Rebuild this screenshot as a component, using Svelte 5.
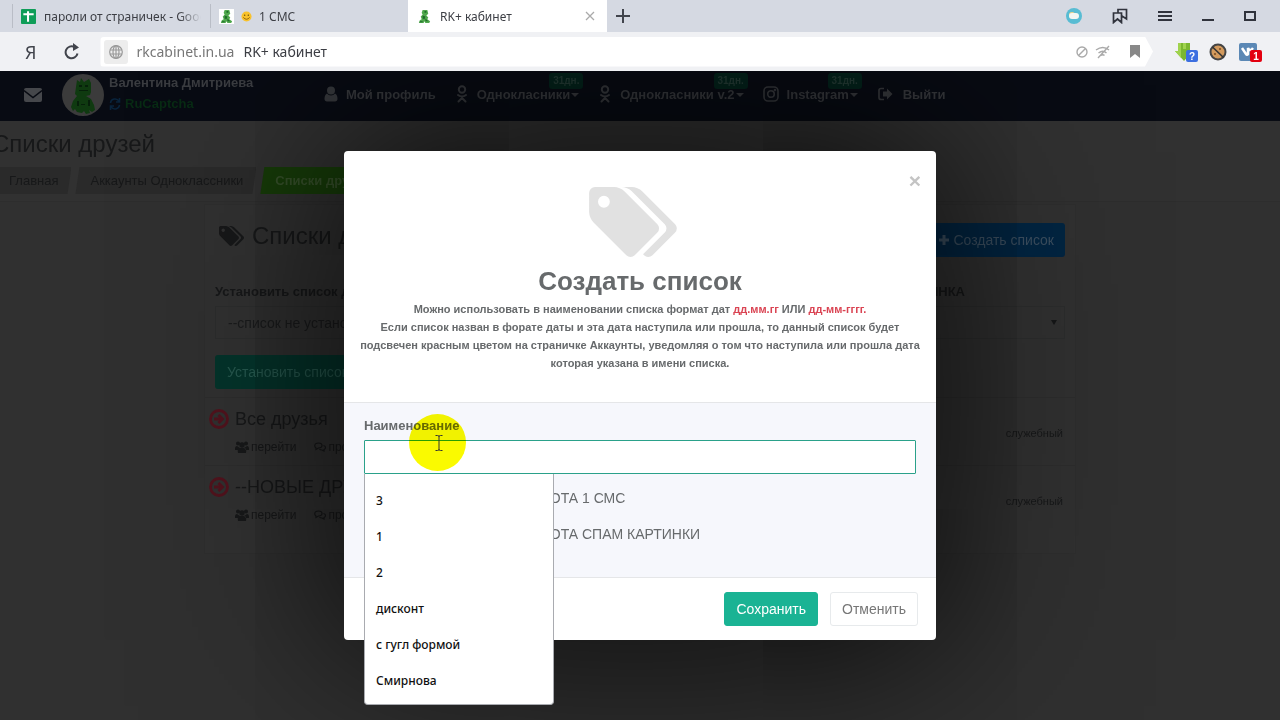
<script lang="ts">
  // Friend lists page with the "create list" dialog open, inside the browser frame.

  interface NavItem {
    icon: 'user' | 'ok' | 'insta' | 'exit';
    label: string;
    badge?: string;
  }

  const navItems: NavItem[] = [
    { icon: 'user', label: 'Мой профиль' },
    { icon: 'ok', label: 'Однокласники', badge: '31дн.' },
    { icon: 'ok', label: 'Однокласники v.2', badge: '31дн.' },
    { icon: 'insta', label: 'Instagram', badge: '31дн.' },
    { icon: 'exit', label: 'Выйти' },
  ];

  const friendLists = ['Все друзья', '--НОВЫЕ ДРУЗЬЯ'];
  const suggestions = ['3', '1', '2', 'дисконт', 'с гугл формой', 'Смирнова'];
  const options = ['РАБОТА 1 СМС', 'РАБОТА СПАМ КАРТИНКИ'];

  let open = $state(true);
  let name = $state('');

  function pick(value: string) {
    name = value;
  }

  function close() {
    open = false;
  }
</script>

{#snippet tags()}
  <svg class="tags" viewBox="0 128 1900 1516" aria-hidden="true">
    <path
      fill="currentColor"
      d="M448 448q0-53-37.5-90.5t-90.5-37.5-90.5 37.5-37.5 90.5 37.5 90.5 90.5 37.5 90.5-37.5 37.5-90.5zm1067 576q0 53-37 90l-491 492q-39 37-91 37-53 0-90-37l-715-716q-38-37-64.5-101t-26.5-117v-416q0-52 38-90t90-38h416q53 0 117 26.5t102 64.5l715 714q37 39 37 91zm384 0q0 53-37 90l-491 492q-39 37-91 37-36 0-59-14t-53-45l470-470q37-37 37-90 0-52-37-91l-715-714q-38-38-102-64.5t-117-26.5h224q53 0 117 26.5t102 64.5l715 714q37 39 37 91z"
    />
  </svg>
{/snippet}

{#snippet lizard()}
  <svg class="favicon" viewBox="0 0 16 16" aria-hidden="true">
    <path fill="#4fa84c" d="M6 1l5 0 1 4-2 2 2 2-1 2 3 2-1 2H9l-1-2-1 2H2l1-3 2-1-1-3 2-2-1-2z" />
    <path fill="#1f6b2a" d="M8 2h2v2H8zM6 7l3 1-1 3-2-1zM3 13h3v1H3zM9 10l3 3H9z" />
  </svg>
{/snippet}

{#snippet navIcon(kind: NavItem['icon'])}
  {#if kind === 'user'}
    <svg width="14" height="16" viewBox="0 0 14 16" fill="currentColor" aria-hidden="true">
      <circle cx="7" cy="4.5" r="4" />
      <path d="M3 7.5C1 8.500 .5 10.500.5 13c0 1.500 1 2.500 2.500 2.500h8c1.500 0 2.500-1 2.500-2.500 0-2.500-.5-4.500-2.500-5.500-1 1.300-2.500 2-4 2s-3-.7-4-2z" />
    </svg>
  {:else if kind === 'ok'}
    <svg width="14" height="18" viewBox="0 0 14 18" fill="none" stroke="currentColor" stroke-width="2" stroke-linecap="round" aria-hidden="true">
      <circle cx="7" cy="4.500" r="3.200" />
      <path d="M3 10c2.500 1.800 5.500 1.800 8 0M7 11.500v1.500M3.500 16.500L7 13l3.500 3.500" />
    </svg>
  {:else if kind === 'insta'}
    <svg width="16" height="16" viewBox="0 0 16 16" fill="none" stroke="currentColor" stroke-width="1.600" aria-hidden="true">
      <rect x="1" y="1" width="14" height="14" rx="4" />
      <circle cx="8" cy="8" r="3.300" />
      <circle cx="12" cy="4" r=".5" />
    </svg>
  {:else}
    <svg width="18" height="16" viewBox="0 0 18 16" aria-hidden="true">
      <path fill="none" stroke="currentColor" stroke-width="1.700" d="M7 2.500H4q-2 0-2 2v7q0 2 2 2h3" />
      <path fill="currentColor" d="M6 5.500h4V2.500L15.500 8 10 13.500v-3H6z" />
    </svg>
  {/if}
{/snippet}

<div class="browser">
  <div class="tabs">
    <div class="tab first">
      <svg class="favicon" viewBox="0 0 16 16" aria-hidden="true">
        <rect width="16" height="16" rx="1" fill="#0f9d58" />
        <path d="M2.500 5.500h11M7.500 2.500v11" stroke="#fff" stroke-width="2.200" />
      </svg>
      <span class="tab-title faded">пароли от страничек - Google</span>
    </div>
    <div class="tab second">
      <span class="favicon-plate">{@render lizard()}</span>
      <svg class="smile" viewBox="0 0 12 12" aria-hidden="true">
        <circle cx="6" cy="6" r="5.500" fill="#f9c22b" />
        <circle cx="4" cy="4.500" r=".8" fill="#5c4208" />
        <circle cx="8" cy="4.500" r=".8" fill="#5c4208" />
        <path d="M2.500 7q3.500 4 7 0" fill="none" stroke="#8a5f0c" />
      </svg>
      <span class="tab-title">1 СМС</span>
    </div>
    <div class="tab active">
      {@render lizard()}
      <span class="tab-title">RK+ кабинет</span>
      <button class="icon-btn" aria-label="Закрыть вкладку">
        <svg width="10" height="10" viewBox="0 0 10 10" stroke="#aaa" stroke-width="1.300"><path d="M1 1l8 8M9 1L1 9" /></svg>
      </button>
    </div>
    <button class="icon-btn new-tab" aria-label="Новая вкладка">
      <svg width="14" height="14" viewBox="0 0 14 14" stroke="#41444c" stroke-width="2"><path d="M7 0v14M0 7h14" /></svg>
    </button>
    <div class="window-buttons">
      <button class="icon-btn" aria-label="Погода">
        <svg width="16" height="16" viewBox="0 0 16 16">
          <circle cx="8" cy="8" r="8" fill="#58bcd3" />
          <circle cx="6" cy="7" r="3" fill="#f3d48b" />
          <rect x="3" y="5" width="10" height="6" rx="3" fill="#f3f6f2" />
        </svg>
      </button>
      <button class="icon-btn" aria-label="Закладки">
        <svg width="16" height="16" viewBox="0 0 16 16" fill="none" stroke="#30333c" stroke-width="1.700">
          <path d="M1.500 5h8v9.500L5.500 11l-4 3.500zM6 5V1.500h8.500V11L10 8" />
        </svg>
      </button>
      <button class="icon-btn" aria-label="Меню">
        <svg width="14" height="12" viewBox="0 0 14 12" stroke="#30333c" stroke-width="2"><path d="M0 2h14M0 6h14M0 10h14" /></svg>
      </button>
      <button class="icon-btn" aria-label="Свернуть">
        <svg width="12" height="12" viewBox="0 0 12 12" stroke="#30333c" stroke-width="2"><path d="M0 10h12" /></svg>
      </button>
      <button class="icon-btn" aria-label="Развернуть">
        <svg width="12" height="12" viewBox="0 0 12 12" fill="none" stroke="#30333c" stroke-width="2"><path d="M1 2h10v8H1z" /></svg>
      </button>
    </div>
  </div>

  <div class="toolbar">
    <button class="icon-btn yandex" aria-label="Яндекс">Я</button>
    <button class="icon-btn" aria-label="Обновить">
      <svg width="16" height="18" viewBox="0 0 16 18">
        <path d="M13.500 10.500a6 6 0 1 1-3-6.500" fill="none" stroke="#41444c" stroke-width="2" />
        <path d="M9 0l6 4.500L9 8z" fill="#41444c" />
      </svg>
    </button>
    <div class="address">
      <span class="globe">
        <svg width="14" height="14" viewBox="0 0 14 14" fill="none" stroke="#999" stroke-width="1.200" aria-hidden="true">
          <circle cx="7" cy="7" r="6.300" />
          <ellipse cx="7" cy="7" rx="3" ry="6.300" />
          <path d="M1 5h12M1 9h12M7 1v12" />
        </svg>
      </span>
      <span class="host">rkcabinet.in.ua</span>
      <span class="page-name">RK+ кабинет</span>
      <span class="address-icons">
        <svg width="12" height="12" viewBox="0 0 12 12" fill="none" stroke="#aaa" stroke-width="1.400" aria-hidden="true">
          <circle cx="6" cy="6" r="5" /><path d="M2.500 9.500l7-7" />
        </svg>
        <svg width="16" height="14" viewBox="0 0 16 14" fill="none" stroke="#aaa" stroke-width="1.400" aria-hidden="true">
          <path d="M1 5q7-5 13 0M3.500 8q4.500-3.500 8 0M6 10.500q2-1.500 3.500 0M3 13L14 1" />
        </svg>
        <svg class="mark" width="10" height="13" viewBox="0 0 10 13" aria-hidden="true"><path fill="#888" d="M0 0h10v13L5 9l-5 4z" /></svg>
      </span>
    </div>
    <div class="extensions">
      <button class="icon-btn" aria-label="Загрузки">
        <svg width="24" height="20" viewBox="0 0 24 20">
          <path fill="#7bb72f" d="M4 1h12v8h3l-9 10L1 9h3z" />
          <path fill="#a0d34e" d="M4 1h3v15L1 9h3zM9 1h3v6H9z" />
          <rect x="12" y="8" width="12" height="12" rx="2" fill="#3d6fe0" />
          <text x="18" y="18" text-anchor="middle">?</text>
        </svg>
      </button>
      <button class="icon-btn" aria-label="Блокировка cookie">
        <svg width="18" height="18" viewBox="0 0 18 18">
          <circle cx="9" cy="9" r="7.500" fill="#d39a5d" stroke="#454545" stroke-width="2" />
          <path d="M3.500 4l11 10.500" stroke="#333" stroke-width="1.600" />
          <circle cx="11" cy="6" r="1" fill="#7a4b20" /><circle cx="6" cy="11" r="1" fill="#7a4b20" />
        </svg>
      </button>
      <button class="icon-btn" aria-label="ВКонтакте">
        <svg width="24" height="20" viewBox="0 0 24 20">
          <rect x="1" y="1" width="18" height="18" rx="2" fill="#5b88b5" />
          <path d="M4 6l4 6q1 1.500 2 0V6q2 4 5 0" fill="none" stroke="#fff" stroke-width="2.500" />
          <rect x="12" y="8" width="12" height="12" rx="2" fill="#e3000f" />
          <text x="18" y="18" text-anchor="middle">1</text>
        </svg>
      </button>
    </div>
  </div>
</div>

<div class="page">
  <header class="topbar">
    <a class="mail" href="#mail" aria-label="Сообщения">
      <svg width="18" height="14" viewBox="0 0 18 14" aria-hidden="true">
        <rect width="18" height="14" rx="2" fill="currentColor" />
        <path d="M0 2.500l9 7 9-7" fill="none" stroke="#080b13" stroke-width="1.500" />
      </svg>
    </a>
    <svg class="avatar" viewBox="0 0 42 42" aria-hidden="true">
      <circle cx="21" cy="21" r="21" fill="#3b3b3b" />
      <path fill="#0f3a10" d="M15 6l3 2 1-4 3 4 5-3 2 4v9l-1 3-4 1 5 3 3 6 1 5-3 2-3-2 1 3-4 1-2-3-2 2-5-1-2-3-2 2-2-4 2-6 4-5-2-2z" />
      <path fill="#06200a" d="M17 11h3v2h-3zM23 11h3v2h-3zM17 16h9v1h-9zM15 27h2v5h-2zM26 26h2v6h-2zM19 30h4v1h-4z" />
    </svg>
    <div class="account">
      <span class="user-name">Валентина Дмитриева</span>
      <a class="captcha" href="#captcha">
        <svg width="12" height="12" viewBox="0 0 12 12" fill="none" stroke="#09233b" stroke-width="1.600" aria-hidden="true">
          <path d="M1.500 5A4.500 4.500 0 0 1 10 3.500M10.500 0v4H7M10.500 7A4.500 4.500 0 0 1 2 8.500M1.500 12V8H5" />
        </svg>
        RuCaptcha
      </a>
    </div>
    <nav class="menu">
      {#each navItems as item, i (i)}
        <a class="menu-item" href="#menu">
          {@render navIcon(item.icon)}
          <span>{item.label}{#if item.badge}<i class="caret"></i>{/if}</span>
          {#if item.badge}<span class="badge">{item.badge}</span>{/if}
        </a>
      {/each}
    </nav>
  </header>

  <section class="heading">
    <h1>Списки друзей</h1>
    <nav class="crumbs">
      <a href="#home">Главная</a>
      <a href="#accounts">Аккаунты Одноклассники</a>
      <a class="current" href="#lists">Списки друзей</a>
    </nav>
  </section>

  <main class="card">
    <div class="card-head">
      <h2>{@render tags()} Списки друзей</h2>
      <button class="create">
        <svg width="10" height="10" viewBox="0 0 10 10" stroke="currentColor" stroke-width="3" aria-hidden="true"><path d="M5 0v10M0 5h10" /></svg>
        Создать список
      </button>
    </div>
    <label class="set-label" for="set-list"><span>Установить список для</span><span>КАРТИНКА</span></label>
    <div class="select-wrap">
      <select id="set-list">
        <option>--список не установлен--</option>
      </select>
    </div>
    <button class="set-btn">Установить список</button>

    <ul class="lists">
      {#each friendLists as title (title)}
        <li>
          <svg class="go" viewBox="0 0 20 20" fill="none" stroke="currentColor" aria-hidden="true">
            <circle cx="10" cy="10" r="8.500" stroke-width="2.800" />
            <path d="M5 10h8M9.500 6l4 4-4 4" stroke-width="2.800" />
          </svg>
          <div class="list-main">
            <h3>{title}</h3>
            <div class="links">
              <a href="#open">
                <svg width="14" height="12" viewBox="0 0 14 12" fill="currentColor" aria-hidden="true">
                  <circle cx="3" cy="2.500" r="2" /><circle cx="11" cy="2.500" r="2" /><circle cx="7" cy="4" r="2.700" />
                  <path d="M0 8q0-3 2-3l3 2-2 2H0zM14 8q0-3-2-3L9 7l2 2h3zM3 12q-1-5 2-5h4q3 0 2 5z" />
                </svg>
                перейти
              </a>
              <a href="#view">
                <svg width="12" height="10" viewBox="0 0 12 10" fill="none" stroke="currentColor" stroke-width="1.200" aria-hidden="true">
                  <path d="M4.500 1q3.500 0 3.500 2.500T4.500 6L2 7.500V6Q.5 5 .8 3.500 1 1 4.500 1zM9.500 3.500q2 .5 2 2T10 7.500V9L8 8Q6 8 5.500 7" />
                </svg>
                просмотр
              </a>
            </div>
          </div>
          <span class="kind">служебный</span>
        </li>
      {/each}
    </ul>
  </main>

  {#if open}
    <div class="overlay">
      <div class="modal" role="dialog" aria-labelledby="modal-title">
        <header class="modal-header">
          <button class="close" aria-label="Закрыть" onclick={close}>×</button>
          {@render tags()}
          <h4 id="modal-title">Создать список</h4>
          <p>
            Можно использовать в наименовании списка формат дат <em>дд.мм.гг</em> ИЛИ <em>дд-мм-гггг.</em><br />
            Если список назван в форате даты и эта дата наступила или прошла, то данный список будет
            подсвечен красным цветом на страничке Аккаунты, уведомляя о том что наступила или прошла дата
            которая указана в имени списка.
          </p>
        </header>
        <div class="modal-body">
          <label class="field-label" for="list-name">Наименование</label>
          <div class="field">
            <input id="list-name" type="text" autocomplete="off" bind:value={name} />
            <ul class="suggest">
              {#each suggestions as s (s)}
                <li><button onclick={() => pick(s)}>{s}</button></li>
              {/each}
            </ul>
            <span class="spot"></span>
            <svg class="ibeam" viewBox="0 0 8 18" fill="none" stroke="#333" aria-hidden="true">
              <path d="M.5 1.500h2q1.500 0 1.500 1 0-1 1.500-1h2M4 2v14M.5 16.500h2q1.500 0 1.500-1 0 1 1.500 1h2" />
            </svg>
          </div>
          <div class="checks">
            {#each options as option (option)}
              <label><input type="checkbox" />{option}</label>
            {/each}
          </div>
        </div>
        <footer class="modal-footer">
          <button class="btn primary">Сохранить</button>
          <button class="btn" onclick={close}>Отменить</button>
        </footer>
      </div>
    </div>
  {/if}
</div>

<style>
  :global(body) {
    margin: 0;
    background: #303030;
  }
  button,
  input,
  select {
    font-family: inherit;
    box-sizing: border-box;
  }
  a {
    color: inherit;
    text-decoration: none;
  }
  h1,
  h2,
  h3,
  h4,
  p,
  ul {
    margin: 0;
    padding: 0;
    font-weight: 400;
  }
  ul {
    list-style: none;
  }
  svg {
    display: block;
    flex: none;
  }

  /* browser frame */
  .browser {
    font-family: 'Noto Sans', 'Open Sans', sans-serif;
    color: #3c3e44;
  }
  .icon-btn {
    display: flex;
    align-items: center;
    justify-content: center;
    padding: 0;
    border: 0;
    background: none;
    cursor: pointer;
  }
  .tabs {
    display: flex;
    height: 32px;
    padding-left: 12px;
    background: #d5d9e2;
  }
  .tab {
    display: flex;
    align-items: center;
    gap: 8px;
    width: 198px;
    box-sizing: border-box;
    padding: 0 9px;
    font-size: 12px;
    white-space: nowrap;
  }
  .tab.first,
  .tab.second {
    background: linear-gradient(#b9bdc6, #b9bdc6) no-repeat left 4px / 1px 24px;
  }
  .tab.active {
    width: 199px;
    padding-right: 12px;
    background: #fff;
  }
  .tab.active .tab-title {
    flex: 1;
  }
  .tab-title {
    overflow: hidden;
  }
  .faded {
    mask-image: linear-gradient(to right, #000 86%, transparent);
  }
  .favicon {
    width: 15px;
    height: 15px;
  }
  .favicon-plate {
    background: #fff;
  }
  .smile {
    width: 11px;
    height: 11px;
  }
  .tab.second {
    gap: 7px;
  }
  .new-tab {
    width: 32px;
  }
  .window-buttons {
    display: flex;
    gap: 30px;
    margin-left: auto;
    padding-right: 24px;
  }
  .toolbar {
    display: flex;
    align-items: center;
    gap: 28px;
    height: 39px;
    padding-left: 25px;
    background: #f0f1f4;
  }
  .yandex {
    font-size: 18px;
    color: #41444c;
  }
  .address {
    display: flex;
    flex: 1;
    align-items: center;
    height: 30px;
    margin-left: -8px;
    padding: 0 13px 0 4px;
    border-radius: 4px;
    background: #fff;
    font-size: 14px;
    clip-path: polygon(0 0, calc(100% - 8px) 0, 100% 50%, calc(100% - 8px) 100%, 0 100%);
  }
  .globe {
    display: flex;
    align-items: center;
    justify-content: center;
    width: 24px;
    height: 24px;
    border-radius: 3px;
    background: #ededed;
  }
  .host {
    margin: 0 9px 0 8px;
    color: #777;
  }
  .address-icons {
    display: flex;
    align-items: center;
    gap: 7px;
    margin-left: auto;
  }
  .mark {
    margin-left: 12px;
  }
  .extensions {
    display: flex;
    gap: 6px;
    padding-right: 17px;
    margin-left: -8px;
  }
  .extensions .icon-btn {
    width: 26px;
  }
  .extensions text {
    fill: #fff;
    font: bold 10px 'Liberation Sans', sans-serif;
  }

  /* dimmed page */
  .page {
    position: relative;
    min-height: calc(100vh - 71px);
    overflow: hidden;
    background: #303030;
    font-family: 'Liberation Sans', Arial, sans-serif;
    font-size: 13px;
    color: #171819;
  }
  .topbar {
    display: flex;
    align-items: center;
    height: 50px;
    box-sizing: border-box;
    padding: 0 24px 2px;
    background: #080b13;
    color: #3a3c40;
    font-weight: 700;
    white-space: nowrap;
  }
  .mail {
    margin-right: 20px;
    color: #45474b;
  }
  .avatar {
    width: 42px;
    height: 42px;
    margin-right: 5px;
  }
  .account {
    display: flex;
    flex-direction: column;
    gap: 5px;
    width: 215px;
    line-height: 16px;
    padding-bottom: 4px;
  }
  .captcha {
    display: flex;
    align-items: center;
    gap: 4px;
    font-size: 13px;
    color: #082b14;
  }
  .menu {
    display: flex;
    gap: 19px;
    padding-bottom: 2px;
    color: #35373b;
  }
  .menu-item {
    position: relative;
    display: flex;
    align-items: center;
    gap: 8px;
    height: 18px;
  }
  .caret {
    display: inline-block;
    margin-left: 1px;
    vertical-align: 2px;
    border: 4px solid transparent;
    border-top-color: currentColor;
    border-bottom: 0;
  }
  .badge {
    position: absolute;
    right: -4px;
    top: -12px;
    width: 34px;
    border-radius: 3px;
    background: #03221b;
    color: #233a34;
    font-size: 10px;
    line-height: 16px;
    text-align: center;
  }
  .heading {
    height: 81px;
    box-sizing: border-box;
    padding-top: 9px;
    border-bottom: 1px solid #2d2d2d;
    background: #313131;
  }
  h1 {
    margin-left: -8px;
    font-size: 24px;
    line-height: 28px;
  }
  .crumbs {
    display: flex;
    gap: 4px;
    margin: 9px 0 0 -6px;
    line-height: 27px;
  }
  .crumbs a {
    padding: 0 13px 0 15px;
    background: #2a2a2a;
    clip-path: polygon(4px 0, 100% 0, calc(100% - 4px) 100%, 0 100%);
  }
  .crumbs .current {
    background: #173c09;
    color: #36502a;
    font-weight: 700;
  }
  .card {
    max-width: 850px;
    margin: 2px auto 0;
    padding: 18px 10px 20px;
    border: 1px solid #2e2e2e;
    background: #313131;
  }
  .card-head {
    display: flex;
    align-items: center;
    justify-content: space-between;
  }
  h2 {
    display: flex;
    gap: 8px;
    align-items: center;
    padding: 0 0 8px 4px;
    font-size: 24px;
    line-height: 26px;
  }
  h2 .tags {
    width: 25px;
    height: 20px;
  }
  .create,
  .set-btn {
    display: flex;
    align-items: center;
    gap: 4px;
    height: 34px;
    padding: 0 11px;
    border: 0;
    border-radius: 3px;
    background: #022542;
    color: #3c4f60;
    font-size: 14px;
  }
  .set-label {
    display: flex;
    justify-content: space-between;
    margin: 26px 100px 0 0;
    font-weight: 700;
    line-height: 18px;
  }
  .select-wrap {
    position: relative;
    margin: 5px 0 16px;
  }
  .select-wrap::after {
    content: '';
    position: absolute;
    right: 8px;
    top: 14px;
    border: 3px solid transparent;
    border-top: 5px solid #151617;
    border-bottom: 0;
  }
  select {
    display: block;
    width: 100%;
    height: 33px;
    padding: 0 12px;
    border: 1px solid #2c2d2d;
    background: #313131;
    color: #1a1b1c;
    font-size: 14px;
    appearance: none;
  }
  .set-btn {
    padding: 0 12px;
    background: #04342b;
    color: #27594f;
  }
  .lists {
    margin: 8px -10px 0;
  }
  .lists li {
    display: flex;
    gap: 6px;
    height: 67px;
    padding: 0 12px 0 4px;
    border-top: 1px solid #2d2d2d;
  }
  .go {
    width: 20px;
    height: 20px;
    margin-top: 11px;
    color: #52131d;
  }
  .list-main {
    flex: 1;
  }
  h3 {
    padding-top: 9px;
    font-size: 18px;
    line-height: 24px;
  }
  .links {
    display: flex;
    gap: 18px;
    padding-top: 7px;
    font-size: 12px;
    line-height: 18px;
  }
  .links a {
    display: flex;
    align-items: center;
    gap: 2px;
  }
  .kind {
    font-size: 11px;
    line-height: 70px;
  }

  /* dialog */
  .overlay {
    position: absolute;
    inset: 0;
    display: flex;
    align-items: flex-start;
    justify-content: center;
    padding-top: 80px;
  }
  .modal {
    width: 592px;
    max-width: 94%;
    border-radius: 4px;
    background: #fff;
    box-shadow: 0 0 200px #000;
    color: #676a6c;
  }
  .modal-header {
    position: relative;
    display: flex;
    flex-direction: column;
    align-items: center;
    padding: 36px 16px 30px;
    border-bottom: 1px solid #e5e6e8;
    text-align: center;
  }
  .modal-header .tags {
    width: 90px;
    height: 70px;
    margin-right: 14px;
    color: #e1e1e1;
  }
  .close {
    position: absolute;
    right: 12px;
    top: 18px;
    padding: 0 3px;
    border: 0;
    background: none;
    color: #c4c4c4;
    font-size: 21px;
    font-weight: 700;
    line-height: 24px;
  }
  h4 {
    margin: 9px 0 4px;
    font-size: 26px;
    font-weight: 700;
    line-height: 30px;
  }
  .modal-header p {
    font-size: 11px;
    font-weight: 700;
    line-height: 18px;
  }
  em {
    color: #da4453;
    font-style: normal;
  }
  .modal-body {
    padding: 14px 20px 25px;
    background: #f6f7fc;
  }
  .field-label {
    display: block;
    margin-bottom: 5px;
    font-weight: 700;
    line-height: 18px;
  }
  .field {
    position: relative;
  }
  .field input {
    display: block;
    width: 100%;
    height: 34px;
    padding: 0 12px;
    border: 1px solid #2aa18a;
    border-radius: 1px;
    background: #fff;
    font-size: 14px;
    outline: 0;
  }
  .suggest {
    position: absolute;
    z-index: 2;
    left: 0;
    top: 34px;
    width: 190px;
    box-sizing: border-box;
    padding: 8px 0 6px;
    border: 1px solid #a9abb0;
    border-top: 0;
    border-radius: 0 0 4px 4px;
    background: #fff;
  }
  .suggest button {
    display: block;
    width: 100%;
    height: 36px;
    padding: 0 11px;
    border: 0;
    background: none;
    color: #111;
    font: 500 12px 'Noto Sans', 'Open Sans', sans-serif;
    text-align: left;
  }
  .spot {
    position: absolute;
    left: 45px;
    top: -26px;
    width: 57px;
    height: 57px;
    border-radius: 50%;
    background: #fafa00;
    mix-blend-mode: multiply;
  }
  .ibeam {
    position: absolute;
    left: 71px;
    top: -6px;
    width: 8px;
    height: 18px;
  }
  .checks {
    display: flex;
    flex-direction: column;
    gap: 16px;
    padding: 14px 0 8px 140px;
    font-size: 14px;
    line-height: 20px;
  }
  .checks label {
    display: flex;
    align-items: center;
    gap: 6px;
  }
  .checks input {
    width: 13px;
    height: 13px;
    margin: 0;
  }
  .modal-footer {
    display: flex;
    justify-content: flex-end;
    gap: 12px;
    padding: 14px 18px;
    border-top: 1px solid #e5e6e8;
  }
  .btn {
    height: 34px;
    padding: 0 11px;
    border: 1px solid #e7eaec;
    border-radius: 3px;
    background: #fff;
    color: #777;
    font-size: 14px;
  }
  .btn.primary {
    border-color: #1ab394;
    background: #1ab394;
    color: #fff;
  }
</style>
